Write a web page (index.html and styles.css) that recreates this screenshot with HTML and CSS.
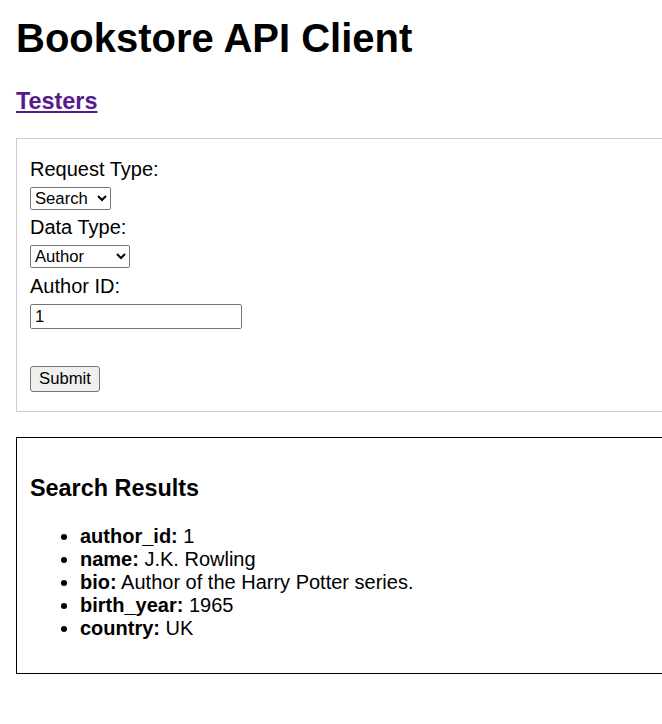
FILE: index.html
```html
<!DOCTYPE html>
<html lang="en">
<head>
<meta charset="utf-8">
<title>Bookstore API Client</title>
<link rel="stylesheet" href="styles.css">
</head>
<body>
  <h1 class="title">Bookstore API Client</h1>
  <nav class="nav">
    <a class="nav-link" href="#testers">Testers</a>
  </nav>

  <form class="request-form">
    <label class="field-label" for="request-type">Request Type:</label>
    <select class="field-select select-request" id="request-type">
      <option>Search</option>
      <option>Create</option>
      <option>Update</option>
      <option>Delete</option>
    </select>
    <label class="field-label" for="data-type">Data Type:</label>
    <select class="field-select select-data" id="data-type">
      <option>Author</option>
      <option>Book</option>
      <option>Publisher</option>
    </select>
    <label class="field-label" for="author-id">Author ID:</label>
    <input class="field-input" id="author-id" type="text" value="1">
    <button class="submit-btn" type="button">Submit</button>
  </form>

  <section class="results">
    <h3 class="results-title">Search Results</h3>
    <ul class="results-list">
      <li><strong>author_id:</strong> 1</li>
      <li><strong>name:</strong> J.K. Rowling</li>
      <li><strong>bio:</strong> Author of the Harry Potter series.</li>
      <li><strong>birth_year:</strong> 1965</li>
      <li><strong>country:</strong> UK</li>
    </ul>
  </section>
</body>
</html>
```
FILE: styles.css
```css
html {
  overflow: hidden;
}

body {
  margin: 0;
  padding: 0 16px;
  font-family: "Liberation Sans", Arial, sans-serif;
  font-size: 20px;
  color: #000;
  background: #fff;
}

.title {
  font-size: 40px;
  font-weight: bold;
  margin: 16px 0 26.6px;
  line-height: normal;
}

.nav {
  margin: 0 0 23.2px;
  font-size: 23.4px;
  font-weight: bold;
  line-height: normal;
}

.nav-link {
  color: #551a8b;
  text-decoration: underline;
}

.request-form {
  width: 100%;
  border: 1px solid #cccccc;
  padding: 12.5px 13px;
  display: flex;
  flex-direction: column;
  align-items: flex-start;
  margin: 0;
}

.field-label {
  display: block;
  margin: 6.25px 0;
  font-size: 20px;
  line-height: 23px;
}

.field-select {
  margin: 0;
  height: 23px;
  font-family: "Liberation Sans", Arial, sans-serif;
  font-size: 16.67px;
  box-sizing: border-box;
}

.select-request {
  width: 81px;
}

.select-data {
  width: 100px;
}

.field-input {
  box-sizing: border-box;
  width: 212px;
  height: 25.5px;
  margin: 0;
  padding: 1px 4px;
  font-family: "Liberation Sans", Arial, sans-serif;
  font-size: 16.67px;
  border: 1px solid #767676;
  border-radius: 2px;
}

.submit-btn {
  margin: 36.5px 0 6.25px;
  box-sizing: border-box;
  width: 70px;
  height: 26px;
  padding: 0;
  font-family: "Liberation Sans", Arial, sans-serif;
  font-size: 16.67px;
  color: #000;
  background: #efefef;
  border: 1px solid #767676;
  border-radius: 3px;
}

.results {
  margin-top: 25.7px;
  width: 100%;
  border: 1px solid #000;
  padding: 13px 13px 12.5px;
}

.results-title {
  font-size: 23.4px;
  font-weight: bold;
  margin: 23.4px 0;
  line-height: normal;
}

.results-list {
  margin: 20px 0;
  padding-left: 50px;
  line-height: 23px;
}
```
